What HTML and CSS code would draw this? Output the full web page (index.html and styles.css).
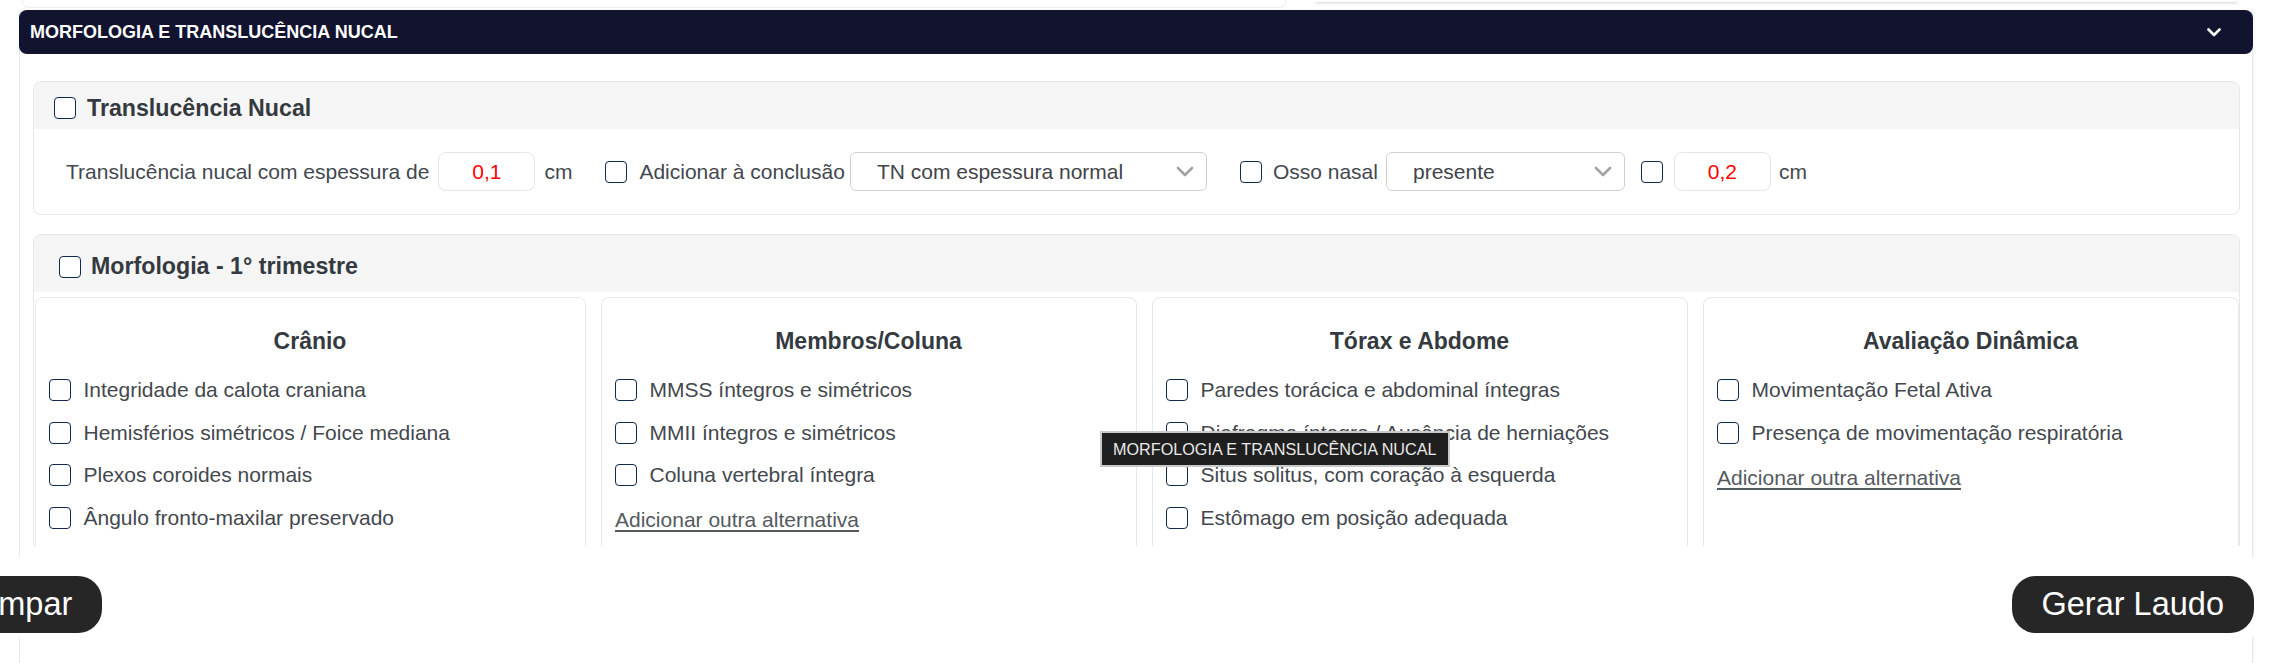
FILE: index.html
```html
<!DOCTYPE html>
<html lang="pt-BR">
<head>
<meta charset="utf-8">
<title>Morfologia e Translucência Nucal</title>
<link rel="stylesheet" href="styles.css">
</head>
<body>
<div class="page">
  <div class="prev-row">
    <div class="prev-left"></div>
    <div class="prev-right"></div>
  </div>
  <div class="panel">
    <div class="panel-header">
      <span>MORFOLOGIA E TRANSLUCÊNCIA NUCAL</span>
      <svg class="hdr-chev" width="14" height="9" viewBox="0 0 14 9"><polyline points="1.5,1.5 7,7 12.5,1.5" fill="none" stroke="#fff" stroke-width="2.6" stroke-linecap="round" stroke-linejoin="round"/></svg>
    </div>
    <div class="panel-body">
      <div class="scroll">
        <section class="sec sec-tn">
          <div class="sec-head head-tn">
            <span class="cb"></span>
            <span class="sec-title">Translucência Nucal</span>
          </div>
          <div class="tn-body">
            <span class="txt">Translucência nucal com espessura de</span>
            <span class="num num-1">0,1</span>
            <span class="txt unit">cm</span>
            <span class="cb cb-add"></span>
            <span class="txt lbl-add">Adicionar à conclusão</span>
            <div class="select sel-1">
              <span>TN com espessura normal</span>
              <svg width="18" height="11" viewBox="0 0 18 11"><polyline points="2,2 9,9 16,2" fill="none" stroke="#a3a3a3" stroke-width="2.6" stroke-linecap="round" stroke-linejoin="round"/></svg>
            </div>
            <span class="cb cb-osso"></span>
            <span class="txt lbl-osso">Osso nasal</span>
            <div class="select sel-2">
              <span>presente</span>
              <svg width="18" height="11" viewBox="0 0 18 11"><polyline points="2,2 9,9 16,2" fill="none" stroke="#a3a3a3" stroke-width="2.6" stroke-linecap="round" stroke-linejoin="round"/></svg>
            </div>
            <span class="cb cb-val"></span>
            <span class="num num-2">0,2</span>
            <span class="txt unit2">cm</span>
          </div>
        </section>

        <section class="sec sec-morf">
          <div class="sec-head head-morf">
            <span class="cb"></span>
            <span class="sec-title">Morfologia - 1° trimestre</span>
          </div>
          <div class="cards">
            <div class="card">
              <div class="card-title">Crânio</div>
              <label class="item"><span class="cb"></span><span>Integridade da calota craniana</span></label>
              <label class="item"><span class="cb"></span><span>Hemisférios simétricos / Foice mediana</span></label>
              <label class="item"><span class="cb"></span><span>Plexos coroides normais</span></label>
              <label class="item"><span class="cb"></span><span>Ângulo fronto-maxilar preservado</span></label>
            </div>
            <div class="card">
              <div class="card-title">Membros/Coluna</div>
              <label class="item"><span class="cb"></span><span>MMSS íntegros e simétricos</span></label>
              <label class="item"><span class="cb"></span><span>MMII íntegros e simétricos</span></label>
              <label class="item"><span class="cb"></span><span>Coluna vertebral íntegra</span></label>
              <a class="add-link">Adicionar outra alternativa</a>
            </div>
            <div class="card">
              <div class="card-title">Tórax e Abdome</div>
              <label class="item"><span class="cb"></span><span>Paredes torácica e abdominal íntegras</span></label>
              <label class="item"><span class="cb"></span><span>Diafragma íntegro / Ausência de herniações</span></label>
              <label class="item"><span class="cb"></span><span>Situs solitus, com coração à esquerda</span></label>
              <label class="item"><span class="cb"></span><span>Estômago em posição adequada</span></label>
            </div>
            <div class="card">
              <div class="card-title">Avaliação Dinâmica</div>
              <label class="item"><span class="cb"></span><span>Movimentação Fetal Ativa</span></label>
              <label class="item"><span class="cb"></span><span>Presença de movimentação respiratória</span></label>
              <a class="add-link">Adicionar outra alternativa</a>
            </div>
          </div>
        </section>
      </div>
    </div>
  </div>

  <div class="tooltip">MORFOLOGIA E TRANSLUCÊNCIA NUCAL</div>

  <div class="footer">
    <button class="btn btn-limpar">Limpar</button>
    <button class="btn btn-gerar">Gerar Laudo</button>
  </div>
</div>
</body>
</html>
```

FILE: styles.css
```css
* { box-sizing: border-box; }

html, body {
  margin: 0;
  padding: 0;
  height: 663px;
  overflow: hidden;
  background: #ffffff;
  font-family: "Liberation Sans", Arial, sans-serif;
}

.page {
  position: relative;
  height: 663px;
  padding: 0 25px 0 19px;
}

/* remnants of the cards above (scrolled) */
.prev-row {
  display: flex;
  align-items: flex-start;
  height: 10px;
  padding-left: 3px;
}
.prev-left {
  width: 1264px;
  height: 8px;
  border: 1px solid #eceef2;
  border-top: none;
  border-radius: 0 0 6px 6px;
}
.prev-right {
  margin-left: 29px;
  width: 923px;
  height: 3px;
  border-bottom: 1px solid #dfe3ea;
  border-radius: 0 0 6px 6px;
  box-shadow: 0 1px 3px rgba(0, 0, 0, 0.10);
}

.panel {
  height: 653px;
  border-left: 1px solid #e4e8ef;
  border-right: 1px solid #e4e8ef;
  box-shadow: 1px 0 3px rgba(0, 0, 0, 0.05);
}

.panel-header {
  margin: 0 -1px;
  height: 44px;
  background: #12132f;
  border-radius: 8px;
  color: #ffffff;
  font-weight: bold;
  font-size: 18px;
  display: flex;
  align-items: center;
  justify-content: space-between;
  padding: 0 32px 0 11px;
}
.hdr-chev { display: block; }

.scroll {
  height: 492px;
  overflow: hidden;
  padding: 27px 12px 0 13px;
}

.sec {
  border: 1px solid #e3e7ee;
  border-radius: 8px;
  background: #ffffff;
  overflow: hidden;
}

.sec-head {
  background: #f5f5f5;
  display: flex;
  align-items: center;
}
.head-tn {
  height: 47px;
  padding: 5px 0 0 20px;
  gap: 11px;
}
.head-morf {
  height: 57px;
  padding: 6px 0 0 25px;
  gap: 10px;
}
.sec-title {
  font-weight: bold;
  font-size: 23.2px;
  color: #343a40;
}

.cb {
  flex: none;
  width: 22px;
  height: 22px;
  border: 1.5px solid #10294d;
  border-radius: 4px;
  background: #ffffff;
  display: inline-block;
}

.tn-body {
  height: 85px;
  display: flex;
  align-items: center;
  padding-left: 32px;
  font-size: 21px;
  color: #43484e;
}
.txt { white-space: nowrap; }

.num {
  flex: none;
  width: 97px;
  height: 39px;
  border: 1px solid #e2e5eb;
  border-radius: 8px;
  color: #ff0000;
  display: flex;
  align-items: center;
  justify-content: center;
}
.num-1 { margin-left: 9px; }
.unit { margin-left: 9px; }
.cb-add { margin-left: 33px; }
.lbl-add { margin-left: 12px; }

.select {
  flex: none;
  height: 39px;
  border: 1px solid #cfcfcf;
  border-radius: 6px;
  display: flex;
  align-items: center;
  justify-content: space-between;
  padding: 0 12px 0 26px;
  color: #3f4449;
}
.select svg { display: block; }
.sel-1 { width: 357px; margin-left: 5px; }
.cb-osso { margin-left: 33px; }
.lbl-osso { margin-left: 11px; }
.sel-2 { width: 239px; margin-left: 8px; }
.cb-val { margin-left: 16px; }
.num-2 { margin-left: 11px; }
.unit2 { margin-left: 8px; }

.sec-morf { margin-top: 19px; }

.cards {
  display: grid;
  grid-template-columns: 551px 1fr 1fr 1fr;
  column-gap: 15px;
  margin-top: 5px;
  padding-left: 1px;
}

.card {
  border: 1px solid #e4e8ef;
  border-radius: 8px;
  padding: 28px 14px 20px 13px;
  min-height: 320px;
}
.card-title {
  text-align: center;
  font-weight: bold;
  font-size: 23px;
  line-height: 30px;
  color: #343a40;
  margin-bottom: 12.7px;
}
.item {
  height: 42.6px;
  display: flex;
  align-items: center;
  gap: 12.5px;
  font-size: 21px;
  color: #43484e;
  white-space: nowrap;
}
.add-link {
  display: block;
  margin-top: 9px;
  font-size: 21px;
  line-height: 30px;
  color: #555a60;
  text-decoration: underline;
  text-underline-offset: 3px;
}

.tooltip {
  position: absolute;
  left: 1100px;
  top: 431px;
  height: 36px;
  padding: 0 11px;
  background: #1f1f1f;
  border: 2px solid #c9c9c9;
  color: #e9e9e9;
  font-size: 16.2px;
  line-height: 32px;
  white-space: nowrap;
}

.footer {
  position: absolute;
  left: 0;
  right: 0;
  top: 557px;
  height: 80px;
  background: #ffffff;
  display: flex;
  align-items: flex-start;
  justify-content: space-between;
  padding: 19px 24px 0 0;
}
.btn {
  height: 57px;
  border: none;
  border-radius: 24px;
  background: #262626;
  color: #ffffff;
  font-family: "Liberation Sans", Arial, sans-serif;
  font-size: 32.5px;
  padding: 0 30px;
  cursor: pointer;
}
.btn-limpar { margin-left: -57px; }
```
